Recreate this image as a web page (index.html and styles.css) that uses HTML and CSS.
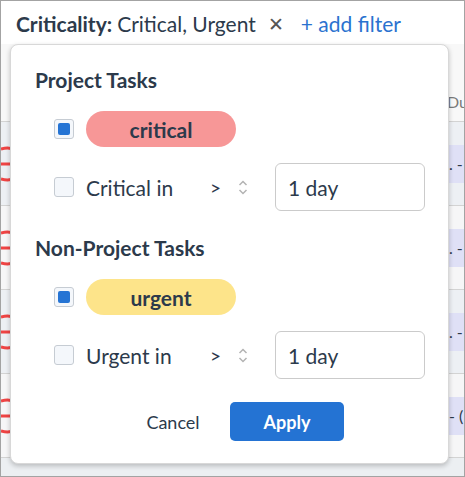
FILE: index.html
```html
<!DOCTYPE html>
<html>
<head>
<meta charset="utf-8">
<link rel="stylesheet" href="styles.css">
</head>
<body>
<div class="frame">
  <div class="filterbar">
    <span class="f-key">Criticality:</span>
    <span class="f-val">Critical, Urgent</span>
    <span class="f-x">✕</span>
    <span class="f-add">+ add filter</span>
  </div>
  <div class="thead"><span class="th-due">Du</span></div>
  <div class="trow alt">
    <svg class="rmark" width="10" height="36" viewBox="0 0 10 36"><path d="M0 3 Q6 1.5 10 2.5 M0 18 H10 M0 33 Q6 34.5 10 33.5" stroke="#ef4444" stroke-width="3" fill="none"/></svg>
    <div class="datecell">. -</div>
  </div>
  <div class="trow">
    <svg class="rmark" width="10" height="36" viewBox="0 0 10 36"><path d="M0 3 Q6 1.5 10 2.5 M0 18 H10 M0 33 Q6 34.5 10 33.5" stroke="#ef4444" stroke-width="3" fill="none"/></svg>
    <div class="datecell">. -</div>
  </div>
  <div class="trow alt">
    <svg class="rmark" width="10" height="36" viewBox="0 0 10 36"><path d="M0 3 Q6 1.5 10 2.5 M0 18 H10 M0 33 Q6 34.5 10 33.5" stroke="#ef4444" stroke-width="3" fill="none"/></svg>
    <div class="datecell">. -</div>
  </div>
  <div class="trow">
    <svg class="rmark" width="10" height="36" viewBox="0 0 10 36"><path d="M0 3 Q6 1.5 10 2.5 M0 18 H10 M0 33 Q6 34.5 10 33.5" stroke="#ef4444" stroke-width="3" fill="none"/></svg>
    <div class="datecell d2">- (</div>
  </div>
  <div class="tfoot"></div>

  <div class="popup">
    <div class="section">
      <div class="sec-title">Project Tasks</div>
      <div class="row">
        <span class="cb checked"></span>
        <span class="pill critical">critical</span>
      </div>
      <div class="row">
        <span class="cb"></span>
        <span class="lbl">Critical in</span>
        <span class="gt">&gt;</span>
        <svg class="updown" width="10" height="15" viewBox="0 0 10 15"><path d="M1.5 5 L5 1.5 L8.5 5 M1.5 10 L5 13.5 L8.5 10" stroke="#b3b3b3" stroke-width="1.5" fill="none"/></svg>
        <span class="inp">1 day</span>
      </div>
    </div>
    <div class="section">
      <div class="sec-title">Non-Project Tasks</div>
      <div class="row">
        <span class="cb checked"></span>
        <span class="pill urgent">urgent</span>
      </div>
      <div class="row">
        <span class="cb"></span>
        <span class="lbl">Urgent in</span>
        <span class="gt">&gt;</span>
        <svg class="updown" width="10" height="15" viewBox="0 0 10 15"><path d="M1.5 5 L5 1.5 L8.5 5 M1.5 10 L5 13.5 L8.5 10" stroke="#b3b3b3" stroke-width="1.5" fill="none"/></svg>
        <span class="inp">1 day</span>
      </div>
    </div>
    <div class="actions">
      <span class="btn cancel">Cancel</span>
      <span class="btn apply">Apply</span>
    </div>
  </div>
</div>
</body>
</html>
```
FILE: styles.css
```css
* { box-sizing: border-box; }
html, body { margin: 0; padding: 0; }
body {
  width: 465px;
  height: 477px;
  font-family: Lato, "Open Sans", sans-serif;
  color: #2c3a4b;
  overflow: hidden;
  background: #fff;
}
.frame {
  position: relative;
  width: 465px;
  height: 477px;
  border: 1px solid #a3a3a3;
  overflow: hidden;
  background: #f7f7f7;
}
.filterbar {
  height: 43px;
  background: #fff;
  display: flex;
  align-items: center;
  padding-left: 15px;
  padding-top: 1px;
  font-size: 21px;
  white-space: nowrap;
}
.f-key { font-weight: 700; }
.f-val { margin-left: 5px; }
.f-x { margin-left: 12px; color: #555; font-size: 19px; }
.f-add { margin-left: 17px; color: #2a72cf; }
.thead {
  height: 78px;
  border-bottom: 1px solid #d3d3d3;
  background: #f8f8f8;
  display: flex;
  align-items: center;
  padding-top: 38px;
  padding-left: 446px;
  white-space: nowrap;
  font-size: 16px;
  color: #7a7a7a;
}
.trow {
  height: 84px;
  border-bottom: 1px solid #d3d3d3;
  background: #f6f6f7;
  display: flex;
  align-items: center;
  overflow: hidden;
}
.trow.alt { background: #edf0f4; }
.rmark { flex: 0 0 10px; }
.datecell {
  margin-left: auto;
  width: 15px;
  height: 38px;
  background: #dfe0f6;
  display: flex;
  align-items: center;
  padding-left: 0;
  font-size: 16px;
  white-space: nowrap;
  overflow: hidden;
}
.tfoot { height: 20px; background: #eceff2; }

.popup {
  position: absolute;
  left: 9px;
  top: 43px;
  width: 439px;
  height: 420px;
  background: #fff;
  border: 1px solid #d8d8d8;
  border-radius: 8px;
  box-shadow: 0 2px 5px rgba(0,0,0,0.22);
  padding: 24px 23px 0 24px;
}
.section + .section { margin-top: 26px; }
.sec-title {
  font-size: 21px;
  font-weight: 700;
  line-height: 22px;
  height: 22px;
}
.row {
  display: flex;
  align-items: center;
  padding-left: 19px;
  white-space: nowrap;
}
.sec-title + .row { margin-top: 20px; height: 36px; }
.row + .row { margin-top: 16px; height: 48px; }
.cb {
  flex: 0 0 20px;
  width: 20px;
  height: 20px;
  border: 1px solid #c6ccd3;
  border-radius: 3px;
  background: #f4f7fb;
  display: flex;
  align-items: center;
  justify-content: center;
}
.cb.checked::after {
  content: "";
  width: 12px;
  height: 12px;
  background: #2574d4;
  border-radius: 2px;
}
.pill {
  margin-left: 12px;
  width: 150px;
  height: 36px;
  border-radius: 18px;
  display: flex;
  align-items: center;
  justify-content: center;
  font-size: 21px;
  font-weight: 700;
}
.pill.critical { background: #f79797; }
.pill.urgent { background: #fde48a; }
.lbl {
  margin-left: 12px;
  flex: 0 0 124px;
  font-size: 21px;
}
.gt { flex: 0 0 12px; font-size: 19px; }
.updown { margin-left: 16px; flex: 0 0 10px; }
.inp {
  margin-left: 27px;
  flex: 0 0 150px;
  height: 48px;
  border: 1px solid #cbcbcb;
  border-radius: 6px;
  display: flex;
  align-items: center;
  padding-left: 12px;
  font-size: 21px;
}
.actions {
  margin-top: 23px;
  display: flex;
  justify-content: center;
}
.btn {
  width: 114px;
  height: 39px;
  border-radius: 5px;
  display: flex;
  align-items: center;
  justify-content: center;
  font-size: 18px;
}
.cancel { color: #2c3a4b; }
.apply { background: #2473d3; color: #fff; font-weight: 700; }
```
